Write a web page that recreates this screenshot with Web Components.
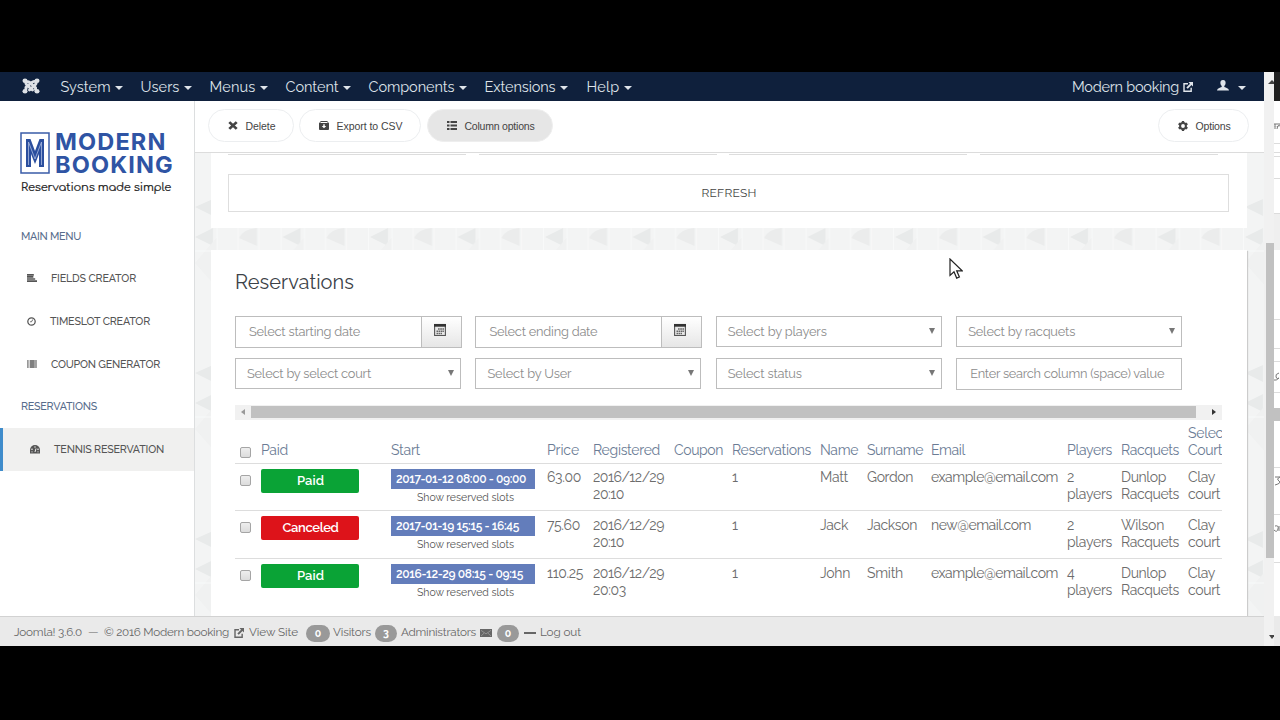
<!DOCTYPE html>
<html lang="en">
<head>
<meta charset="utf-8">
<title>Modern booking - Tennis reservation</title>
<style>
html,body{margin:0;background:#000;overflow:hidden}
body{width:1280px;height:720px;font-family:Raleway,Lato,"Open Sans",sans-serif;font-size:14px;color:#555}
</style>
</head>
<body>
<booking-app></booking-app>
<script>
const define=(name,html,setup)=>customElements.define(name,class extends HTMLElement{
  constructor(){super();this.attachShadow({mode:'open'});}
  connectedCallback(){
    if(this.ready)return;this.ready=true;
    this.shadowRoot.innerHTML=typeof html==='function'?html(this):html;
    if(setup)setup(this,this.shadowRoot);
  }
});

/* Text run tracked out to a given width */
const runs=new Set();
class FitText extends HTMLElement{
  constructor(){
    super();
    this.attachShadow({mode:'open'}).innerHTML=`<style>:host{display:inline-block;white-space:nowrap;vertical-align:top}span{display:inline-block}</style><span><slot></slot></span>`;
  }
  connectedCallback(){runs.add(this);}
  fit(){
    const w=+this.getAttribute('w');if(!w)return;
    const s=this.shadowRoot.querySelector('span');
    const n=this.textContent.length;
    const natural=s.getBoundingClientRect().width;
    this.style.width=w+'px';
    s.style.letterSpacing=((w+1-natural)/n).toFixed(3)+'px';
  }
}
customElements.define('fit-text',FitText);

const ICONS={
  joomla:['0 0 18 18','<g fill="none" stroke="#dde1e6" stroke-width="3" stroke-linecap="round" stroke-linejoin="round"><path d="M4 12.500V10.500L10.500 4.500Q12 3.500 13.500 4"/><path d="M4.500 4.500Q6 3.500 7.500 4.800L13.500 11V13"/><path d="M4 4.500Q3.500 6.500 5 8L10.500 13.500"/><path d="M14 4.500Q14.500 6.500 13 8L7.500 13.500"/></g><g fill="#dde1e6"><circle cx="3" cy="3" r="2.500"/><circle cx="15" cy="3" r="2.500"/><circle cx="3" cy="15" r="2.500"/><circle cx="15" cy="15" r="2.500"/></g>'],
  caret:['0 0 8 4','<path d="M0 0h8L4 4z" fill="currentColor"/>'],
  ext:['0 0 12 12','<path d="M6 2H1.200v9h8.600V7" fill="none" stroke="currentColor" stroke-width="1.700"/><path d="M6.500 0H12v5.500L10.200 3.700 5.700 8.200 4 6.500 8.400 2z" fill="currentColor"/>'],
  user:['0 0 12 12','<path d="M6 0C3.800 0 3.300 1.800 3.400 3.500 3.500 5 4.300 6 4.700 6.500v1.200C3 8.400.3 9 0 11.500h12C11.700 9 9 8.400 7.300 7.700V6.500C7.700 6 8.500 5 8.600 3.500 8.700 1.800 8.200 0 6 0z" fill="currentColor"/>'],
  x:['0 0 10 10','<path d="M1.300 1.300l7.400 7.400M8.700 1.300L1.300 8.700" stroke="currentColor" stroke-width="2.700"/>'],
  box:['0 0 11 10','<path fill-rule="evenodd" d="M2 0h7l2 2.500V9q0 1-1 1H1Q0 10 0 9V2.500zM2 1.200l-.7 1h8.400l-.7-1zM4.700 3.500v2H3L5.500 8 8 5.500H6.300v-2z" fill="currentColor"/>'],
  list:['0 0 10 10','<path d="M0 0h2.500v2.200H0zM3.500 0H10v2.200H3.500zM0 3.900h2.500v2.200H0zM3.500 3.900H10v2.200H3.500zM0 7.800h2.500V10H0zM3.500 7.800H10V10H3.500z" fill="currentColor"/>'],
  gear:['0 0 10 10','<circle cx="5" cy="5" r="2.900" fill="none" stroke="currentColor" stroke-width="2"/><path d="M5 0v1.700M5 8.300V10M.7 2.500l1.500.9M7.800 6.600l1.500.9M.7 7.500l1.500-.9M7.800 3.400l1.500-.9" stroke="currentColor" stroke-width="2.300"/>'],
  align:['0 0 11 9','<path d="M0 1h7.500M0 3.300h7M0 5.600h9M0 8h11" stroke="currentColor" stroke-width="1.900"/>'],
  clock:['0 0 10 10','<circle cx="5" cy="5" r="4.100" fill="none" stroke="currentColor" stroke-width="1.400"/><path d="M6.500 2.700L5 5.300H3.500" fill="none" stroke="currentColor"/>'],
  barcode:['0 0 11 9','<path d="M.5 0v9M2 0v9M9.500 0v9M10.700 0v9" stroke="currentColor" stroke-width=".7"/><path d="M3.200 0h5.300v9H3.200z" fill="currentColor" opacity=".75"/>'],
  dash:['0 0 10 9','<path d="M0 8.500V5a5 5 0 0 1 10 0v3.500z" fill="currentColor"/><g fill="#f0f0ef"><circle cx="2" cy="4.300" r=".8"/><circle cx="5" cy="2" r=".7"/><circle cx="8" cy="4.300" r=".8"/><circle cx="2" cy="6.800" r=".6"/><circle cx="8" cy="6.800" r=".6"/></g><path d="M5 7l1-3.500" stroke="#f0f0ef"/>'],
  cal:['0 0 12 13','<rect x=".6" y="1.500" width="10.800" height="11" fill="#e8e8e8" stroke="#555" stroke-width="1.100"/><path d="M0 1h12v2.700H0z" fill="#333"/><path d="M4 6h6M2.500 8.300H10M2.500 10.600H8" stroke="#666" stroke-width="1.500" stroke-dasharray="1.700 .5"/>'],
  mail:['0 0 12 9','<path d="M0 0h12v9H0z" fill="currentColor"/><path d="M1 1.500l5 4 5-4M1 8l3.200-3.500M11 8L7.800 4.500" stroke="#999" stroke-width=".9" fill="none"/>'],
  minus:['0 0 12 3','<path d="M0 0h12v3H0z" fill="currentColor"/>'],
  down:['0 0 6 6','<path d="M0 0h6L3 6z" fill="currentColor"/>'],
  left:['0 0 4 6','<path d="M4 0v6L0 3z" fill="currentColor"/>'],
  right:['0 0 4 6','<path d="M0 0v6L4 3z" fill="currentColor"/>'],
  up:['0 0 8 4','<path d="M0 4h8L4 0z" fill="currentColor"/>'],
  pointer:['0 0 14 21','<path d="M1 1v16.500l4-3.700 2.700 6.300 2.700-1.100-2.700-6.200h5.500z" fill="#fff" stroke="#222" stroke-width="1.200"/>'],
  logo:['0 0 30 42','<path d="M1 1h28v40H1z" fill="#fff" stroke="#3a5ca8" stroke-width="1.500"/><path d="M6 35V7h4.500L15 19l4.500-12H24v28h-5V22L15 32l-4-10v13z" fill="#2b4f9e"/><path d="M8.500 33V10L15 27 21.500 10v23" fill="none" stroke="#a9b9de" stroke-width=".8"/>']
};
define('ui-icon',el=>{
  const [vb,body]=ICONS[el.getAttribute('name')];
  const [w,h]=(el.getAttribute('size')||'10,10').split(',');
  return `<style>:host{display:inline-block;flex:none;width:${w}px;height:${h}px}svg{display:block}</style><svg width="${w}" height="${h}" viewBox="${vb}" preserveAspectRatio="none">${body}</svg>`;
});

define('nav-item',el=>`<style>:host{display:flex;align-items:center;gap:5px;color:#dfe4ea;font-size:14.500px;line-height:28px}ui-icon{margin-top:2px}</style>
<fit-text w="${el.getAttribute('w')}">${el.getAttribute('label')}</fit-text><ui-icon name="caret" size="8,4"></ui-icon>`);

define('top-nav',`<style>
:host{display:flex;height:29px;background:#0f203c;color:#dfe4ea;align-items:center;box-sizing:border-box;padding:0 18px 0 22px}
.menu{display:grid;grid-template-columns:80px 69px 76px 83px 116px 102px 60px;margin-left:20.500px}
.right{margin-left:auto;display:flex;align-items:center;font-size:14.500px;line-height:28px}
.u{margin:-2px 9px 0 24px}.c{margin-top:2px}
</style>
<ui-icon name="joomla" size="18,16" style="margin-top:-2px"></ui-icon>
<div class="menu">
<nav-item label="System" w="49"></nav-item><nav-item label="Users" w="38"></nav-item><nav-item label="Menus" w="45"></nav-item><nav-item label="Content" w="52"></nav-item><nav-item label="Components" w="85"></nav-item><nav-item label="Extensions" w="70"></nav-item><nav-item label="Help" w="32"></nav-item>
</div>
<div class="right"><fit-text w="106">Modern booking</fit-text><ui-icon name="ext" size="10,10" style="margin:0 0 0 5px"></ui-icon><ui-icon class="u" name="user" size="12,11"></ui-icon><ui-icon class="c" name="caret" size="8,4"></ui-icon></div>`);

define('side-link',`<style>
:host{display:flex;align-items:center;height:43px;box-sizing:border-box;padding:0 0 1px 27px;gap:14px;color:#555;font-size:10.700px;font-weight:500;line-height:42px}
fit-text{margin-top:1px}
:host([active]){background:#f0f0ef;border-left:3px solid #3f8ccb}
::slotted(fit-text){margin-top:2px}
:host([active]) ::slotted(fit-text){margin-top:1px}
</style><slot></slot>`);

define('side-bar',`<style>
:host{display:flex;flex-direction:column;box-sizing:border-box;width:195px;border-right:1px solid #dcdedf;background:#fff}
.brand{display:grid;grid-template-columns:30px 1fr;column-gap:5px;padding:31px 0 0 20px;height:64px}
.name{font:700 23.500px/23px Inter,sans-serif;color:#2f54a4;width:130px;letter-spacing:1.150px;margin-top:-2px;height:44px}
.tag{grid-column:1/3;font:400 11.500px/14px Comfortaa,Lato,sans-serif;color:#222;margin:5px 0 0 1px;-webkit-text-stroke:.2px #222}
h4{margin:0;padding-left:21px;font-weight:500;font-size:10.700px;line-height:14px;color:#576c8c}
h4.a{margin-top:34px;margin-bottom:13px}
h4.b{margin-top:14px;margin-bottom:14px}
</style>
<div class="brand"><ui-icon name="logo" size="30,42"></ui-icon><div class="name">MODERN BOOKING</div><div class="tag"><fit-text w="149">Reservations made simple</fit-text></div></div>
<h4 class="a"><fit-text w="59">MAIN MENU</fit-text></h4>
<side-link><ui-icon name="align" size="10,8"></ui-icon><fit-text w="84">FIELDS CREATOR</fit-text></side-link>
<side-link><ui-icon name="clock" size="9,9"></ui-icon><fit-text w="99">TIMESLOT CREATOR</fit-text></side-link>
<side-link><ui-icon name="barcode" size="10,8"></ui-icon><fit-text w="108">COUPON GENERATOR</fit-text></side-link>
<h4 class="b"><fit-text w="75">RESERVATIONS</fit-text></h4>
<side-link active><ui-icon name="dash" size="10,9"></ui-icon><fit-text w="109">TENNIS RESERVATION</fit-text></side-link>`);

define('tool-button',`<style>
:host{display:flex;align-items:center;justify-content:center;gap:8px;box-sizing:border-box;height:33px;border:1px solid #eceef0;border-radius:17px;color:#444;font:10.500px/32px "Liberation Sans",Arial,sans-serif;background:#fff}
:host([pressed]){background:#e6e6e6;border-color:#eee}
</style><slot></slot>`);

define('tool-bar',`<style>
:host{display:flex;height:52px;box-sizing:border-box;border-bottom:1px solid #dcdcdc;background:#fff;padding:8px 15px 0 13px}
.gap{flex:1}
</style>
<tool-button style="width:86px;margin-right:5px"><ui-icon name="x" size="10,9"></ui-icon><fit-text w="29">Delete</fit-text></tool-button>
<tool-button style="width:122px;margin-right:6px"><ui-icon name="box" size="10,9"></ui-icon><fit-text w="65">Export to CSV</fit-text></tool-button>
<tool-button pressed style="width:126px"><ui-icon name="list" size="10,9"></ui-icon><fit-text w="69">Column options</fit-text></tool-button>
<div class="gap"></div>
<tool-button style="width:91px"><ui-icon name="gear" size="10,10"></ui-icon><fit-text w="34">Options</fit-text></tool-button>`);

define('filter-field',el=>{
  const k=el.getAttribute('kind');
  return `<style>
:host{display:flex;box-sizing:border-box;width:${k==='date'?227:226}px;height:${k==='select'?31:32}px;border:1px solid #bdbdbd;background:#fff;color:#8c8c8c;font-size:12.800px;line-height:${k==='select'?29:30}px;padding-left:${k==='select'?11:13}px;justify-content:space-between}
.btn{width:39px;border-left:1px solid #bdbdbd;background:linear-gradient(#fff,#e6e6e6);display:flex;justify-content:center}
.btn ui-icon{margin:6px 3px 0 0}
.ar{margin:11px 6px 0 0;color:#777}
</style><fit-text w="${el.getAttribute('w')}">${el.getAttribute('label')}</fit-text>${k==='date'?'<div class="btn"><ui-icon name="cal" size="12,13"></ui-icon></div>':k==='select'?'<ui-icon class="ar" name="down" size="6,6"></ui-icon>':''}`;
});

define('h-scroll',`<style>
:host{display:grid;grid-template-columns:16px 945px 26px;align-items:center;height:15px;background:#f1f1f1}
.l{color:#999;margin-left:6px}.r{color:#333;margin-left:16px}
.t{height:12px;background:#c1c1c1}
</style><ui-icon class="l" name="left" size="4,6"></ui-icon><div class="t"></div><ui-icon class="r" name="right" size="4,6"></ui-icon>`);

define('status-pill',`<style>:host{display:block;width:98px;height:24px;border-radius:2px;background:#0aa336;color:#fff;text-align:center;font-size:13px;font-weight:600;line-height:24px}
:host([state=Canceled]){background:#dd131a}</style><slot></slot>`);

define('slot-chip',`<style>:host{display:block;width:144px}
.c{height:20px;background:#637dbb;color:#fff;font-size:12px;font-weight:600;line-height:20px;padding-left:5px}
.s{font-size:10.500px;line-height:12px;padding:2px 0 0 26px;color:#555;font-weight:400}</style>
<div class="c"><slot></slot></div><div class="s"><fit-text w="96">Show reserved slots</fit-text></div>`);

define('check-box',`<style>:host{display:block;box-sizing:border-box;width:11px;height:11px;border:1px solid #a5a5a5;border-radius:2px;background:linear-gradient(#eee,#dcdcdc);margin-left:5px}</style>`);

const COLS='26px 130px 156px 46px 81px 58px 88px 47px 64px 136px 54px 67px 34px';
define('table-row',`<style>
:host{display:grid;grid-template-columns:${COLS};box-sizing:border-box;height:47.700px;border-top:1px solid #ddd;padding-top:5px;font-weight:400;font-size:14px;line-height:17px;color:#6c6c6c;overflow:hidden}
:host([head]){height:38px;border:0;padding:0 0 5px;align-items:end;color:#6b7c95}
::slotted(check-box){margin-top:6px}
:host([head]) ::slotted(check-box){margin-bottom:1px}
::slotted(div){display:flex;flex-direction:column;align-items:flex-start;white-space:nowrap}
::slotted(.t){margin-top:.9px}
</style><slot></slot>`);

const ft=(t,w)=>`<fit-text w="${w}">${t}</fit-text>`;
const HEAD=[['Paid',26],['Start',28],['Price',31],['Registered',66],['Coupon',48],['Reservations',78],['Name',37],['Surname',55],['Email',33],['Players',44],['Racquets',57]];
const ROWS=[
 ['Paid',26,'2017-01-12 08:00 - 09:00',129,'63.00',33,'20:10',30,'Matt',27,'Gordon',45,'example@email.com',126,'2','Dunlop',44],
 ['Canceled',55,'2017-01-19 15:15 - 16:45',122,'75.60',32,'20:10',30,'Jack',27,'Jackson',49,'new@email.com',99,'2','Wilson',42],
 ['Paid',26,'2016-12-29 08:15 - 09:15',126,'110.25',35,'20:03',32,'John',29,'Smith',35,'example@email.com',126,'4','Dunlop',44]];
define('booking-table',()=>`<style>:host{display:flex;flex-direction:column;width:987px;overflow:hidden}</style>
<table-row head><check-box></check-box>${HEAD.map(([t,w])=>`<div>${ft(t,w)}</div>`).join('')}<div>${ft('Selec',34)}${ft('Court',33)}</div></table-row>
${ROWS.map(r=>`<table-row><check-box></check-box><div><status-pill state="${r[0]}">${ft(r[0],r[1])}</status-pill></div><div><slot-chip>${ft(r[2],r[3])}</slot-chip></div><div class="t">${ft(r[4],r[5])}</div><div class="t">${ft('2016/12/29',70)}${ft(r[6],r[7])}</div><div></div><div class="t">${ft('1',5)}</div><div class="t">${ft(r[8],r[9])}</div><div class="t">${ft(r[10],r[11])}</div><div class="t">${ft(r[12],r[13])}</div><div class="t">${ft(r[14],7)}${ft('players',44)}</div><div class="t">${ft(r[15],r[16])}${ft('Racquets',57)}</div><div class="t">${ft('Clay',26)}${ft('court',31)}</div></table-row>`).join('')}`);

define('work-area',`<style>
:host{display:grid;position:relative;height:463px;overflow:hidden;background:#f3f4f4}
.bg{grid-area:1/1;width:1069px;height:463px}
.stack{grid-area:1/1;position:relative;padding:0 17px 0 16px;display:flex;flex-direction:column;gap:22px}
.p1{height:75px;background:#fff;box-sizing:border-box;padding:0 18px 0 17px}
.stubs{display:grid;grid-template-columns:repeat(4,238px);gap:12.500px;height:2px}
.stubs i{border-bottom:1px solid #ddd;height:1px}
.refresh{margin-top:19px;height:38px;box-sizing:border-box;border:1px solid #dedede;display:flex;justify-content:center;font-size:12px;line-height:36px;color:#444}
.p2{height:366px;background:#fff;box-sizing:border-box;padding:20px 0 0 24px;box-shadow:1px 1px 1px #ccc}
h2{margin:0 0 21px;font-weight:400;font-size:20px;line-height:25px;color:#3c4248}
.filters{display:grid;grid-template-columns:repeat(3,240.400px) 226px;grid-template-rows:31px 32px;row-gap:10.500px;margin-bottom:15px}
h-scroll{width:987px;margin-bottom:5px}
.ptr{position:absolute;left:754px;top:105px}
</style>
<svg class="bg"><defs><pattern id="tri" width="87.500" height="166" patternUnits="userSpaceOnUse">
<path d="M0 84L18 75V93zM0 54L18 46V63z" fill="#e8eaea"/><path d="M44 85Q48 76 62 75L62 93zM44 50L62 40V62z" fill="#ebecec"/>
<path d="M0 110L22 135V84z" fill="#f0f1f1"/><path d="M22 75V100M43 75V100M64 72V100M86 75V100M0 98H87" stroke="#f8f9f9" fill="none"/></pattern></defs><rect width="1069" height="463" fill="url(#tri)"/></svg>
<div class="stack">
<div class="p1"><div class="stubs"><i></i><i></i><i></i><i></i></div><div class="refresh"><fit-text w="54">REFRESH</fit-text></div></div>
<div class="p2"><h2><fit-text w="118">Reservations</fit-text></h2>
<div class="filters">
<filter-field kind="date" label="Select starting date" w="110"></filter-field>
<filter-field kind="date" label="Select ending date" w="107"></filter-field>
<filter-field kind="select" label="Select by players" w="98"></filter-field>
<filter-field kind="select" label="Select by racquets" w="106"></filter-field>
<filter-field kind="select" label="Select by select court" w="123"></filter-field>
<filter-field kind="select" label="Select by User" w="83"></filter-field>
<filter-field kind="select" label="Select status" w="73"></filter-field>
<filter-field kind="text" label="Enter search column (space) value" w="193"></filter-field>
</div>
<h-scroll></h-scroll><booking-table></booking-table></div>
</div>
<ui-icon class="ptr" name="pointer" size="14,21"></ui-icon>`);

define('count-badge',`<style>:host{display:block;height:17px;border-radius:9px;background:#999;color:#fff;text-align:center;font-weight:700;font-size:10.500px;line-height:17px;margin-top:2px}</style><slot></slot>`);
define('status-bar',`<style>
:host{display:grid;grid-template-columns:74px 16px 130px 15px 57px 24px 3px 42px 22px 4px 79px 17px 22px 5px 16px 1fr;align-items:center;box-sizing:border-box;height:30px;border-top:1px solid #d2d2d2;background:#eaeaea;padding-left:14px;font-size:11.700px;line-height:31px;color:#666}
</style>
<fit-text w="67">Joomla! 3.6.0</fit-text><fit-text w="9">—</fit-text><fit-text w="124">© 2016 Modern booking</fit-text>
<ui-icon name="ext" size="10,10"></ui-icon><fit-text w="48">View Site</fit-text>
<count-badge>0</count-badge><i></i><fit-text w="37">Visitors</fit-text><count-badge>3</count-badge><i></i><fit-text w="74">Administrators</fit-text>
<ui-icon name="mail" size="12,8"></ui-icon><count-badge>0</count-badge><i></i><ui-icon name="minus" size="12,2"></ui-icon><fit-text w="40">Log out</fit-text>`);

define('page-scroll',`<style>
:host{display:flex;flex-direction:column;align-items:center;justify-content:space-between;box-sizing:border-box;width:10px;background:#f1f1f1;color:#444;padding:8px 0 7px;overflow:hidden}
.t{width:8px;height:315px;background:#c1c1c1;margin:81px 0 0 2px}
ui-icon{margin-left:5px}
</style><ui-icon name="up" size="8,4"></ui-icon><div class="t"></div><ui-icon name="caret" size="6,4"></ui-icon>`);

define('next-window',`<style>:host{display:block;width:6px;background:#fff;overflow:hidden}svg{display:block}</style>
<svg width="6" height="574"><path d="M0 0h6v29H0z" fill="#202020"/><path d="M0 142h6v36H0z" fill="#efefef"/><path d="M0 336h6v13H0z" fill="#c1c1c1"/><path d="M0 544h6v30H0z" fill="#eaeaea"/>
<path d="M0 54h6M0 71h6M0 80h6M0 84h6M0 106h6M0 141h6M0 247h6M0 276h6M0 289h6M0 320h6M0 395h6M0 442h6M0 490h6" transform="translate(0 .5)" stroke="#dcdcdc"/>
<path d="M0 52h6M1 52v5M3 57q0-4 3-4M5 301q-4 1-3 4t3 1q-3 3-5 2M1 405h5q-4 2-1 4t-4 4M1 454q4-1 3 3t-4 1M5 454v5" stroke="#777" fill="none"/></svg>`);

define('booking-app',`<style>
:host{display:block;box-sizing:border-box;width:1280px;height:720px;padding:72px 0 74px;background:#000;overflow:hidden}
.screen{display:grid;grid-template-columns:1264px 10px 6px;height:574px}
.page{display:grid;grid-template:29px 515px 30px/195px 1069px}
top-nav,status-bar{grid-column:1/3}
main{display:flex;flex-direction:column}
</style>
<div class="screen"><div class="page"><top-nav></top-nav><side-bar></side-bar><main><tool-bar></tool-bar><work-area></work-area></main><status-bar></status-bar></div><page-scroll></page-scroll><next-window></next-window></div>`);

runs.forEach(r=>r.fit());
</script>
</body>
</html>
